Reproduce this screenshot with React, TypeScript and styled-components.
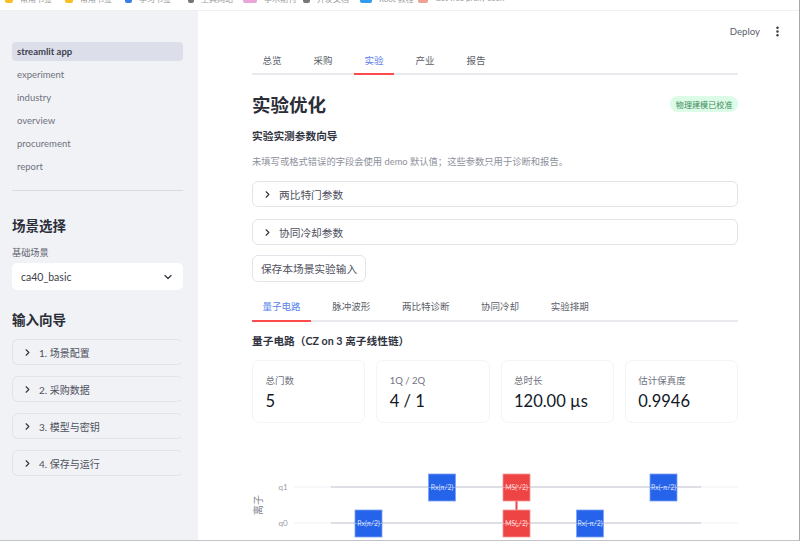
import React from 'react';
import styled, { createGlobalStyle } from 'styled-components';
import { ChevronDown, ChevronRight, EllipsisVertical } from 'lucide-react';

const GlobalStyle = createGlobalStyle`
  html, body {
    margin: 0;
    padding: 0;
    background: #ffffff;
  }

  * {
    box-sizing: border-box;
  }
`;

const Frame = styled.div`
    display: flex;
    flex-direction: column;
    width: 800px;
    height: 541px;
    overflow: hidden;
    border-right: 1px solid #a8a8a8;
    border-bottom: 1px solid #c4c4c8;
    font-family: 'Lato', 'Noto Sans CJK SC', sans-serif;
    color: #31333f;
`;

const BookmarkBar = styled.div`
    display: flex;
    flex: none;
    height: 11px;
    overflow: hidden;
    border-bottom: 1px solid #f0f0f2;
    padding-left: 5px;
`;

const Bookmark = styled.div<{ $width: number }>`
    display: flex;
    flex: none;
    align-items: center;
    gap: 7px;
    width: ${({ $width }) => $width}px;
    height: 12px;
    margin-top: -8px;
    font-size: 8px;
    color: #999999;
    white-space: nowrap;
    overflow: hidden;
`;

const BookmarkDot = styled.span<{ $color: string; $size?: number }>`
    flex: none;
    width: ${({ $size }) => $size ?? 8}px;
    height: 10px;
    border-radius: 2px;
    background: ${({ $color }) => $color};
`;

const Body = styled.div`
    display: flex;
    flex: 1;
    min-height: 0;
`;

const Sidebar = styled.aside`
    flex: none;
    width: 198px;
    padding: 31px 15px 0 12px;
    background: #f0f2f6;
`;

const NavItem = styled.div<{ $active?: boolean }>`
    display: flex;
    align-items: center;
    height: 19px;
    margin-bottom: 4px;
    padding-left: 5px;
    border-radius: 4px;
    font-size: 9.5px;
    font-weight: ${({ $active }) => ($active ? 700 : 400)};
    color: ${({ $active }) => ($active ? '#3d4150' : '#6f7280')};
    background: ${({ $active }) => ($active ? '#dcdfe9' : 'transparent')};
`;

const SideDivider = styled.hr`
    height: 1px;
    margin: 14px 0 0;
    border: none;
    background: #d9dbe2;
`;

const SideHeading = styled.h2<{ $top: number }>`
    margin: ${({ $top }) => $top}px 0 0;
    font-size: 13.5px;
    line-height: 20px;
    font-weight: 700;
    color: #2b2d38;
`;

const FieldLabel = styled.div`
    margin-top: 10px;
    font-size: 9.2px;
    line-height: 14px;
    color: #62646f;
`;

const Select = styled.div`
    display: flex;
    align-items: center;
    justify-content: space-between;
    height: 27px;
    margin-top: 3px;
    padding: 0 9px;
    border-radius: 5px;
    background: #ffffff;
    font-size: 10.5px;
    color: #3d3f4b;
`;

const ExpanderRow = styled.div<{ $gap: number; $height: number; $font: number; $open?: boolean }>`
    display: flex;
    align-items: center;
    gap: 6px;
    height: ${({ $height }) => $height}px;
    margin-bottom: ${({ $gap }) => $gap}px;
    padding-left: 9px;
    border: 1px solid #e2e4ea;
    border-right-color: ${({ $open }) => ($open ? 'transparent' : '#e2e4ea')};
    border-radius: 6px;
    font-size: ${({ $font }) => $font}px;
    color: #4e505c;
`;

const SideWizard = styled.div`
    margin-top: 9px;
`;

const Main = styled.main`
    flex: 1;
    min-width: 0;
    padding-right: 61px;
    padding-left: 54px;
`;

const Toolbar = styled.div`
    display: flex;
    align-items: center;
    justify-content: flex-end;
    gap: 10px;
    height: 30px;
    margin: 5px -46px 0 0;
    font-size: 9.6px;
    color: #5a5d6b;
`;

const KebabSlot = styled.span`
    display: flex;
    width: 14px;
    justify-content: center;
    color: #31333f;
`;

const TabBar = styled.div<{ $gap: number; $height: number }>`
    display: flex;
    gap: ${({ $gap }) => $gap}px;
    height: ${({ $height }) => $height}px;
    border-bottom: 2px solid #e9eaee;
`;

const Tab = styled.div<{ $active?: boolean }>`
    display: flex;
    align-items: center;
    height: calc(100% + 2px);
    padding: 0 10.5px;
    font-size: 9.5px;
    color: ${({ $active }) => ($active ? '#5b82ee' : '#5d5f6b')};
    border-bottom: 2px solid ${({ $active }) => ($active ? '#ff4b4b' : 'transparent')};
`;

const TitleRow = styled.div`
    display: flex;
    align-items: center;
    justify-content: space-between;
    height: 30px;
    margin-top: 14px;
`;

const Title = styled.h1`
    margin: 0;
    font-size: 18.5px;
    font-weight: 700;
    color: #2b2d38;
`;

const Badge = styled.span`
    display: flex;
    align-items: center;
    height: 16px;
    padding: 0 5.5px;
    border-radius: 8px;
    background: #dcfce7;
    font-size: 8.1px;
    color: #3f8a5c;
`;

const SectionTitle = styled.h3<{ $top: number }>`
    margin: ${({ $top }) => $top}px 0 0;
    font-size: 10.7px;
    line-height: 16px;
    font-weight: 700;
    color: #31333f;
`;

const Hint = styled.p`
    margin: 10px 0 11px;
    font-size: 9.3px;
    line-height: 16px;
    color: #8d909b;
    white-space: nowrap;
`;

const SaveButton = styled.div`
    display: flex;
    align-items: center;
    justify-content: center;
    width: 114px;
    height: 27px;
    border: 1px solid #e2e4ea;
    border-radius: 6px;
    font-size: 10.7px;
    color: #4e505c;
`;

const SubTabs = styled.div`
    margin-top: 9px;
`;

const Metrics = styled.div`
    display: grid;
    grid-template-columns: repeat(4, 1fr);
    gap: 11px;
    margin-top: 11px;
`;

const MetricCard = styled.div`
    height: 63px;
    padding: 13px 12.5px 0;
    border: 1px solid #f3f4f6;
    border-radius: 7px;
`;

const MetricLabel = styled.div`
    font-size: 9.5px;
    line-height: 14px;
    color: #6f7280;
`;

const MetricValue = styled.div`
    margin-top: 1px;
    font-size: 16.5px;
    line-height: 24px;
    color: #111827;
`;

const Chart = styled.svg`
    display: block;
    width: 490px;
    height: 104px;
    margin: 15px 0 0 -2px;
    overflow: visible;
`;

const navItems = ['experiment', 'industry', 'overview', 'procurement', 'report'];
const wizard = ['1. 场景配置', '2. 采购数据', '3. 模型与密钥', '4. 保存与运行'];
const topTabs = ['总览', '采购', '实验', '产业', '报告'];
const subTabs = ['量子电路', '脉冲波形', '两比特诊断', '协同冷却', '实验排期'];
const metrics = [
    { label: '总门数', value: '5' },
    { label: '1Q / 2Q', value: '4 / 1' },
    { label: '总时长', value: '120.00 µs' },
    { label: '估计保真度', value: '0.9946' },
];
const bookmarks = [
    { color: '#fbbf24', text: '常用书签', width: 60, size: 8 },
    { color: '#fbbf24', text: '常用书签', width: 60, size: 8 },
    { color: '#3b7de8', text: '学习书签', width: 63, size: 7 },
    { color: '#777777', text: '工具网站', width: 55, size: 6 },
    { color: '#e9a6d8', text: '学术期刊', width: 60, size: 14 },
    { color: '#777777', text: '开发文档', width: 57, size: 7 },
    { color: '#2f9bee', text: 'Root 教程', width: 58, size: 12 },
    { color: '#f0a090', text: 'Get free proxy soon', width: 100, size: 10 },
];
// 门的位置，坐标相对图表左上角
const gates = [
    { x: 105, y: 72, label: 'Rx(π/2)', color: '#2563eb', edge: '#7ea2f3' },
    { x: 178.5, y: 36, label: 'Rx(π/2)', color: '#2563eb', edge: '#7ea2f3' },
    { x: 253, y: 36, label: 'MS(ᵞ/2)', color: '#ef4444', edge: '#f79a9a' },
    { x: 253, y: 72, label: 'MS(ᵪ/2)', color: '#ef4444', edge: '#f79a9a' },
    { x: 326.5, y: 72, label: 'Rx(-π/2)', color: '#2563eb', edge: '#7ea2f3' },
    { x: 400, y: 36, label: 'Rx(-π/2)', color: '#2563eb', edge: '#7ea2f3' },
];

const Expander = ({ label, gap, height, font, open }: { label: string; gap: number; height: number; font: number; open?: boolean }) => (
    <ExpanderRow $gap={gap} $height={height} $font={font} $open={open}>
        <ChevronRight size={11} strokeWidth={2.4} color="#31333f" />
        {label}
    </ExpanderRow>
);

const Wire = ({ y, label }: { y: number; label: string }) => (
    <g>
        <text x={33} y={y + 3} fontSize={8} fill="#9a9da8" textAnchor="middle">{label}</text>
        <line x1={44} x2={81} y1={y} y2={y} stroke="#f4f5f7" strokeWidth={1.5} />
        <line x1={81} x2={451} y1={y} y2={y} stroke="#d3d5dc" strokeWidth={1.5} />
        <line x1={451} x2={488} y1={y} y2={y} stroke="#f4f5f7" strokeWidth={1.5} />
    </g>
);

const App = () => (
    <Frame>
        <GlobalStyle />
        <BookmarkBar>
            {bookmarks.map((b, i) => (
                <Bookmark key={i} $width={b.width}>
                    <BookmarkDot $color={b.color} $size={b.size} />
                    {b.text}
                </Bookmark>
            ))}
        </BookmarkBar>
        <Body>
            <Sidebar>
                <NavItem $active>streamlit app</NavItem>
                {navItems.map((n) => (
                    <NavItem key={n}>{n}</NavItem>
                ))}
                <SideDivider />
                <SideHeading $top={25}>场景选择</SideHeading>
                <FieldLabel>基础场景</FieldLabel>
                <Select>
                    ca40_basic
                    <ChevronDown size={12} strokeWidth={2.4} color="#31333f" />
                </Select>
                <SideHeading $top={20}>输入向导</SideHeading>
                <SideWizard>
                    {wizard.map((w) => (
                        <Expander key={w} label={w} gap={11} height={26} font={10} open />
                    ))}
                </SideWizard>
            </Sidebar>
            <Main>
                <Toolbar>
                    Deploy
                    <KebabSlot>
                        <EllipsisVertical size={13} strokeWidth={2.6} />
                    </KebabSlot>
                </Toolbar>
                <TabBar $gap={11} $height={29}>
                    {topTabs.map((t) => (
                        <Tab key={t} $active={t === '实验'}>{t}</Tab>
                    ))}
                </TabBar>
                <TitleRow>
                    <Title>实验优化</Title>
                    <Badge>物理建模已校准</Badge>
                </TitleRow>
                <SectionTitle $top={9}>实验实测参数向导</SectionTitle>
                <Hint>未填写或格式错误的字段会使用 demo 默认值；这些参数只用于诊断和报告。</Hint>
                <Expander label="两比特门参数" gap={12} height={26} font={10.7} />
                <Expander label="协同冷却参数" gap={10} height={26} font={10.7} />
                <SaveButton>保存本场景实验输入</SaveButton>
                <SubTabs>
                    <TabBar $gap={10.7} $height={31}>
                        {subTabs.map((t, i) => (
                            <Tab key={t} $active={i === 0}>{t}</Tab>
                        ))}
                    </TabBar>
                </SubTabs>
                <SectionTitle $top={11}>量子电路（CZ on 3 离子线性链）</SectionTitle>
                <Metrics>
                    {metrics.map((m) => (
                        <MetricCard key={m.label}>
                            <MetricLabel>{m.label}</MetricLabel>
                            <MetricValue>{m.value}</MetricValue>
                        </MetricCard>
                    ))}
                </Metrics>
                <Chart viewBox="0 0 490 104">
                    <Wire y={49} label="q1" />
                    <Wire y={85} label="q0" />
                    <text x={0} y={0} fontSize={10} fill="#83868f" textAnchor="middle" transform="translate(12 67) rotate(-90)">离子</text>
                    <line x1={266.5} x2={266.5} y1={60} y2={74} stroke="#ef4444" strokeWidth={2} />
                    {gates.map((g, i) => (
                        <g key={i}>
                            <rect x={g.x} y={g.y} width={27} height={27} fill={g.color} stroke={g.edge} strokeWidth={0.8} />
                            <line x1={g.x} x2={g.x + 27} y1={g.y + 13.5} y2={g.y + 13.5} stroke="#ffffff" strokeOpacity={0.3} strokeWidth={1} />
                            <text x={g.x + 13.5} y={g.y + 16} fontSize={6.8} fill="#ffffff" fillOpacity={0.85} textAnchor="middle">{g.label}</text>
                        </g>
                    ))}
                </Chart>
            </Main>
        </Body>
    </Frame>
);

export default App;
